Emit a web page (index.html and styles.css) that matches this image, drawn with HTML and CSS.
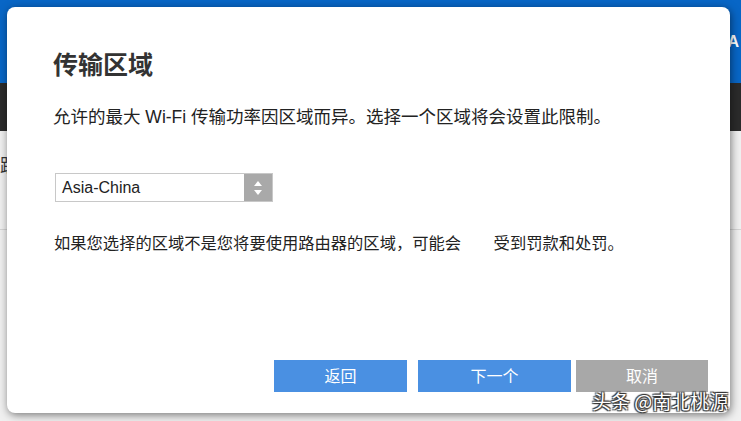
FILE: index.html
```html
<!DOCTYPE html>
<html lang="zh-CN">
<head>
    <meta charset="UTF-8">
    <meta name="viewport" content="width=device-width, initial-scale=1.0">
    <title>传输区域</title>
    <link rel="stylesheet" href="styles.css">
</head>
<body>

    <div class="topbar">
        <span class="brand">A</span>
    </div>
    <div class="navbar"></div>
    <div class="content">
        <p class="bg-line">踮</p>
        <p class="bg-host">主机名</p>
    </div>

    <div class="modal">
        <h2 class="modal-title">传输区域</h2>
        <p class="modal-desc">允许的最大 Wi-Fi 传输功率因区域而异。选择一个区域将会设置此限制。</p>

        <div class="select-box">
            <span class="select-value">Asia-China</span>
            <span class="select-arrow">
                <svg width="10" height="20" viewBox="0 0 10 20">
                    <path d="M5 3 L9 8 L1 8 Z" fill="#fff"/>
                    <path d="M1 12 L9 12 L5 17 Z" fill="#fff"/>
                </svg>
            </span>
        </div>

        <p class="modal-warn">如果您选择的区域不是您将要使用路由器的区域，可能会&emsp;&emsp;受到罚款和处罚。</p>

        <div class="btn-row">
            <button type="button" class="btn btn-back">返回</button>
            <button type="button" class="btn btn-next">下一个</button>
            <button type="button" class="btn btn-cancel">取消</button>
        </div>
    </div>

    <div class="mark">头条 @南北桃源</div>

</body>
</html>
```

FILE: styles.css
```css
body {
    margin: 0;
    width: 741px;
    height: 421px;
    overflow: hidden;
    position: relative;
    background-color: #f0f0f0;
    font-family: "Liberation Sans", "Noto Sans CJK SC", sans-serif;
}
.topbar {
    height: 83px;
    background-color: #0866c6;
    display: flex;
    justify-content: flex-end;
    align-items: center;
}
.brand {
    color: white;
    font-size: 16px;
    font-weight: bold;
    margin-right: 2px;
}
.navbar {
    height: 48px;
    background-color: #2b2b2b;
}
.content {
    padding-top: 20px;
}
.bg-line {
    margin: 0;
    padding-bottom: 52px;
    font-size: 18px;
    color: #333;
    border-bottom: 1px solid #d4d4d4;
}
.bg-host {
    margin: 164px 0 0 25px;
    font-size: 16px;
    line-height: 18px;
    color: #222;
}
.modal {
    position: absolute;
    left: 7px;
    top: 7px;
    width: 723px;
    height: 406px;
    box-sizing: border-box;
    padding: 42px 22px 0 46px;
    background-color: #fff;
    border-radius: 8px;
    box-shadow: 1px 2px 8px rgba(0, 0, 0, 0.5);
}
.modal-title {
    margin: 0;
    font-size: 25px;
    font-weight: bold;
    color: #333;
    line-height: 32px;
}
.modal-desc {
    margin: 25px 0 0 0;
    font-size: 17.5px;
    color: #222;
    line-height: 22px;
}
.select-box {
    display: flex;
    width: 218px;
    height: 29px;
    margin: 45px 0 0 2px;
    border: 1px solid #c8c8c8;
    box-sizing: border-box;
}
.select-value {
    flex: 1;
    padding-left: 6px;
    font-size: 16px;
    line-height: 27px;
    color: #222;
}
.select-arrow {
    width: 28px;
    background-color: #a9a9a9;
    display: flex;
    align-items: center;
    justify-content: center;
}
.modal-warn {
    margin: 30px 0 0 1px;
    font-size: 16.3px;
    color: #222;
    line-height: 22px;
}
.btn-row {
    display: flex;
    justify-content: flex-end;
    margin-top: 106px;
}
.btn {
    height: 32px;
    padding: 0 0 2px 0;
    border: none;
    color: white;
    font-size: 16px;
    line-height: 20px;
    font-family: "Noto Sans CJK SC", sans-serif;
    cursor: pointer;
}
.btn-back {
    width: 133px;
    background-color: #4a90e2;
    margin-right: 11px;
}
.btn-next {
    width: 153px;
    background-color: #4a90e2;
    margin-right: 5px;
}
.btn-cancel {
    width: 132px;
    background-color: #a8a8a8;
}
.mark {
    position: absolute;
    left: 592px;
    top: 391px;
    font-size: 19px;
    line-height: 20px;
    color: white;
    font-family: "Noto Sans CJK SC", sans-serif;
    text-shadow: 1px 1px 1px #333, -1px -1px 1px #333, 1px -1px 1px #333, -1px 1px 1px #333;
}
```
